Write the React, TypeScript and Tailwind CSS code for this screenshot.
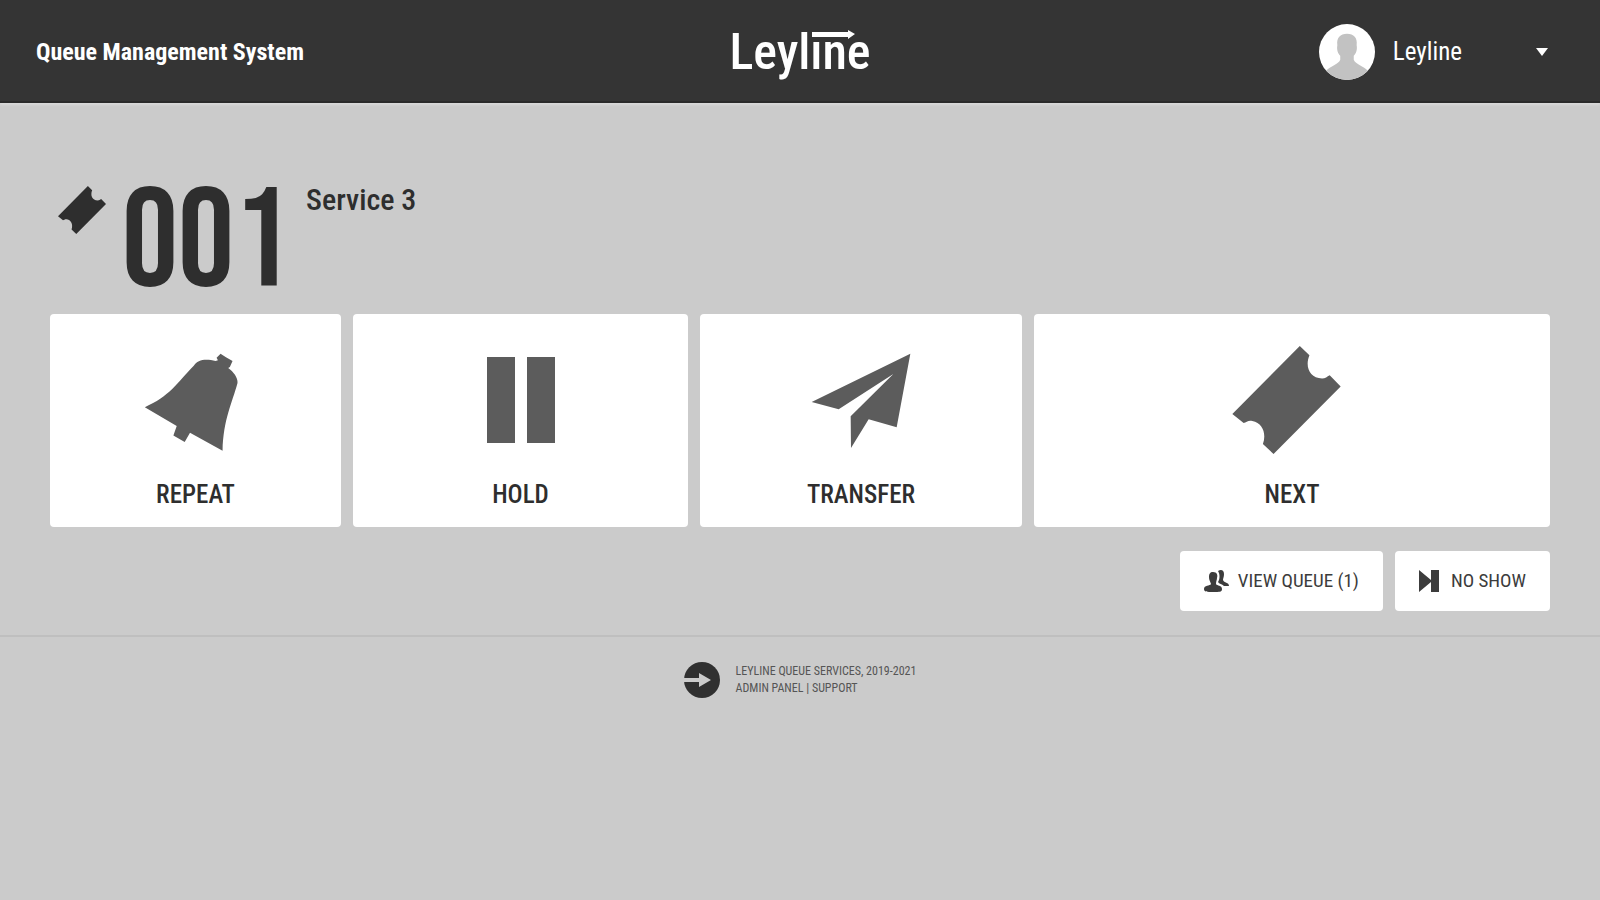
import type { ReactNode } from "react";

const ACTIONS: { label: string; icon: ReactNode }[] = [
  { label: "REPEAT", icon: <BellIcon /> },
  { label: "HOLD", icon: <PauseIcon /> },
  { label: "TRANSFER", icon: <PlaneIcon /> },
  { label: "NEXT", icon: <TicketIcon className="w-[109px] h-[108px] mr-3" /> },
];

function BellIcon() {
  return (
    <svg viewBox="0 -9 285 304" className="w-[95px] h-[101px] mr-2" fill="currentColor" aria-hidden="true">
      <path d="M2 163C75 132 98 92 150 38C160 20 185 16 215 24L222 22L218 14L230 2L245 12L266 24L258 42L253 45C268 55 283 75 281 90C265 150 238 200 236 294L138 240L122 268L88 248L98 220Z" />
    </svg>
  );
}

function PauseIcon() {
  return (
    <svg viewBox="0 0 68 86" className="w-[68px] h-[86px]" fill="currentColor" aria-hidden="true">
      <rect width="28" height="86" />
      <rect x="40" width="28" height="86" />
    </svg>
  );
}

function PlaneIcon() {
  return (
    <svg viewBox="0 0 300 285" className="w-[100px] h-[95px]" fill="currentColor" aria-hidden="true">
      <path d="M298 2L2 147L83 169L247 63L119 190L120 285L173 199L257 223Z" />
    </svg>
  );
}

function TicketIcon({ className }: { className: string }) {
  return (
    <svg viewBox="0 0 326 325" className={className} fill="currentColor" aria-hidden="true">
      <path d="M203 0L232 28C218 62 232 96 270 98C280 98 285 92 293 88L326 122L124 325L92 295C103 265 92 232 60 226C48 223 42 230 34 232L0 205Z" />
    </svg>
  );
}

function PeopleIcon() {
  return (
    <svg viewBox="0 0 26 22" className="w-[26px] h-[22px]" fill="currentColor" aria-hidden="true">
      <path d="M14 1C17 -1 20 0 20 4C20 7 19 8 19 10C20 13 25 12 25 16H20C18 14 15 14 14 12C16 9 16 4 14 1Z" />
      <path d="M9 2C13 2 14 5 13 8C13 10 12 11 12 14C13 16 18 15 18 19C18 22 16 22 9 22C3 22 0 22 0 19C0 15 6 16 7 14C6 11 5 10 5 7C5 4 6 2 9 2Z" />
    </svg>
  );
}

function SkipIcon() {
  return (
    <svg viewBox="0 0 20 22" className="w-[20px] h-[22px]" fill="currentColor" aria-hidden="true">
      <path d="M0 0L12 10V0H20V22H12V12L0 22Z" />
    </svg>
  );
}

function Avatar() {
  return (
    <svg viewBox="0 0 58 58" className="w-14 h-14 rounded-full bg-white" aria-hidden="true">
      <path
        d="M29 10C36 10 40 14 39 22C40 27 38 31 36 33V37C38 42 46 43 51 49V58H7V49C12 43 20 42 22 37V33C20 31 18 27 19 22C18 14 22 10 29 10Z"
        fill="#c2c2c2"
      />
    </svg>
  );
}

export default function App() {
  return (
    <div className="min-h-screen bg-[#cbcbcb] text-[#2e2e2e] font-['Roboto_Condensed',Roboto,sans-serif]">
      {/* Top bar */}
      <header className="grid grid-cols-[1fr_auto_1fr] items-center h-[103px] pt-[3px] px-9 bg-[#343434] border-b-2 border-[#2a2a2a] text-white shadow-[0_2px_2px_#d8d8d8]">
        <h1 className="text-[24px] leading-8 font-bold">Queue Management System</h1>

        <div className="relative text-[50px] leading-[60px] font-medium">
          Leyline
          <svg viewBox="0 0 43 12" className="absolute right-4 top-[7px] w-[43px] h-3" aria-hidden="true">
            <rect width="43" height="12" fill="#343434" />
            <path d="M0 3H36V1L43 5L36 10V8H0Z" fill="white" />
          </svg>
        </div>

        <button type="button" className="justify-self-end flex items-center pr-4 text-[25px] leading-8">
          <Avatar />
          <span className="ml-[18px]">Leyline</span>
          <svg viewBox="0 0 12 8" className="ml-[74px] w-3 h-2" fill="currentColor" aria-hidden="true">
            <path d="M0 0H12L6 8Z" />
          </svg>
        </button>
      </header>

      <main className="px-[50px] pt-[71px]">
        {/* Ticket being served */}
        <div className="flex items-start">
          <TicketIcon className="ml-2 mt-3 w-12 h-12" />
          <span className="ml-4 text-[140px] leading-[140px] font-['Bebas_Neue','Roboto_Condensed',Roboto,sans-serif]">001</span>
          <h2 className="ml-4 mt-2 text-[30px] leading-9 font-medium">Service 3</h2>
        </div>

        <div className="grid grid-cols-[291fr_335fr_322fr_516fr] gap-3">
          {ACTIONS.map(action => (
            <button
              key={action.label}
              type="button"
              className="flex flex-col items-center pt-8 pb-4 rounded bg-white text-[25px] leading-8 font-medium"
            >
              <span className="flex items-center h-[108px] mb-[25px] text-[#5c5c5c]">{action.icon}</span>
              {action.label}
            </button>
          ))}
        </div>

        <div className="flex justify-end gap-3 mt-6">
          <button type="button" className="flex items-center gap-2 h-[60px] px-6 rounded bg-white text-[19px] text-[#3c3c3c]">
            <PeopleIcon />
            VIEW QUEUE (1)
          </button>
          <button type="button" className="flex items-center gap-3 h-[60px] px-6 rounded bg-white text-[19px] text-[#3c3c3c]">
            <SkipIcon />
            NO SHOW
          </button>
        </div>
      </main>

      <footer className="flex justify-center items-center gap-4 mt-6 pt-[25px] border-t-2 border-[#bfbfbf]">
        <svg viewBox="0 0 36 36" className="w-9 h-9" aria-hidden="true">
          <circle cx="18" cy="18" r="18" fill="#303030" />
          <path d="M0 16H15V11L27 18L15 25V20H0Z" fill="#cbcbcb" />
        </svg>
        <div className="text-[12px] leading-[17px] text-[#555555]">
          <p>LEYLINE QUEUE SERVICES, 2019-2021</p>
          <p>
            <a href="#admin">ADMIN PANEL</a> | <a href="#support">SUPPORT</a>
          </p>
        </div>
      </footer>
    </div>
  );
}
